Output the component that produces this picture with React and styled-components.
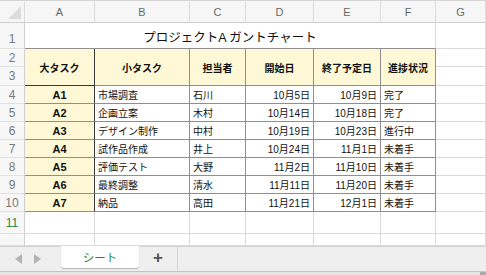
import React from 'react';
import styled, { createGlobalStyle } from 'styled-components';

const GlobalStyle = createGlobalStyle`
  html, body {
    margin: 0;
    padding: 0;
    background: #ffffff;
    overflow: hidden;
  }
  * {
    box-sizing: border-box;
  }
`;

const Page = styled.div`
  width: 486px;
  height: 275px;
  display: flex;
  flex-direction: column;
  font-family: "Liberation Sans", "Noto Sans CJK JP", sans-serif;
  color: #111;
`;

const Sheet = styled.div`
  flex: 1;
  display: grid;
  grid-template-columns: 25px 70px 95px 56px 68px 67px 55px 1fr;
  grid-template-rows: 23px 26px 18px 19px repeat(7, 18px) 22px 1fr;
  overflow: hidden;
`;

const ColHead = styled.div`
  background: #f6f6f6;
  border-top: 1px solid #d4d4d4;
  border-right: 1px solid #dcdcdc;
  border-bottom: 1px solid #cfcfcf;
  display: flex;
  align-items: center;
  justify-content: center;
  font-size: 11px;
  color: #6a6a6a;
`;

const Corner = styled(ColHead)`
  position: relative;
  svg {
    position: absolute;
    right: 3px;
    bottom: 3px;
  }
`;

const RowHead = styled.div`
  grid-row: ${(p) => p.$row || 'auto'};
  background: #f7f7f7;
  border-right: 1px solid #cfcfcf;
  border-bottom: 1px solid #e0e0e0;
  display: flex;
  align-items: center;
  justify-content: center;
  font-size: 12px;
  color: ${(p) => (p.$active ? '#1d8a4a' : '#777')};
`;

const Cell = styled.div`
  grid-column: ${(p) => p.$col || 'auto'};
  grid-row: ${(p) => p.$row || 'auto'};
  border-right: 1px solid ${(p) => p.$edge || '#dadada'};
  border-bottom: 1px solid ${(p) => p.$line || '#dadada'};
  background: ${(p) => p.$bg || '#ffffff'};
  display: flex;
  align-items: center;
  justify-content: ${(p) => p.$align || 'flex-start'};
  padding: 0 3px;
  font-size: 10px;
  font-weight: ${(p) => (p.$bold ? 700 : 400)};
  white-space: nowrap;
  overflow: hidden;
`;

const Title = styled(Cell)`
  font-size: 12.5px;
  justify-content: center;
  padding-top: 1px;
`;

const HeadCell = styled(Cell)`
  font-size: 10px;
  font-weight: 700;
  justify-content: center;
  background: #fef8d6;
`;

const TabBar = styled.div`
  height: 25px;
  display: flex;
  align-items: stretch;
  background: #efefef;
  border-top: 1px solid #d2d2d2;
`;

const NavArrows = styled.div`
  width: 61px;
  display: flex;
  align-items: center;
  justify-content: center;
  gap: 12px;
  padding-right: 6px;
`;

const Tab = styled.div`
  width: 78px;
  margin-top: -1px;
  margin-bottom: 3px;
  background: #ffffff;
  border-radius: 0 0 3px 3px;
  box-shadow: 0 1px 1px rgba(0, 0, 0, 0.25);
  display: flex;
  align-items: center;
  justify-content: center;
  font-size: 11.5px;
  color: #1d8a4a;
`;

const AddButton = styled.div`
  width: 39px;
  border-right: 1px solid #d4d4d4;
  display: flex;
  align-items: center;
  justify-content: center;
  font-size: 17px;
  font-weight: 700;
  color: #555;
  padding-bottom: 2px;
`;

const BottomStrip = styled.div`
  height: 4px;
  background: #e6e6e6;
  border-top: 1px solid #c4c4c4;
  display: flex;
  justify-content: flex-end;
`;

const ScrollNub = styled.div`
  width: 6px;
  background: #aaaaaa;
`;

const columns = ['A', 'B', 'C', 'D', 'E', 'F', 'G'];

const tasks = [
  ['A1', '市場調査', '石川', '10月5日', '10月9日', '完了'],
  ['A2', '企画立案', '木村', '10月14日', '10月18日', '完了'],
  ['A3', 'デザイン制作', '中村', '10月19日', '10月23日', '進行中'],
  ['A4', '試作品作成', '井上', '10月24日', '11月1日', '未着手'],
  ['A5', '評価テスト', '大野', '11月2日', '11月10日', '未着手'],
  ['A6', '最終調整', '清水', '11月11日', '11月20日', '未着手'],
  ['A7', '納品', '高田', '11月21日', '12月1日', '未着手'],
];

const headers = ['大タスク', '小タスク', '担当者', '開始日', '終了予定日', '進捗状況'];

const TABLE = '#8f8f8f';
const DARK = '#3a3a3a';
const YELLOW = '#fef8d6';

export default function App() {
  return (
    <Page>
      <GlobalStyle />
      <Sheet>
        <Corner>
          <svg width="13" height="13" viewBox="0 0 13 13">
            <polygon points="13,0 13,13 0,13" fill="#dcdcdc" />
          </svg>
        </Corner>
        {columns.map((c) => (
          <ColHead key={c}>{c}</ColHead>
        ))}

        {/* row 1: title */}
        <RowHead $row="2" style={{ alignItems: 'flex-end', paddingBottom: 2 }}>1</RowHead>
        <Title $col="2 / span 6" $row="2" $line={TABLE}>
          プロジェクトA ガントチャート
        </Title>
        <Cell $col="8" $row="2" />

        {/* rows 2-3: table header */}
        <RowHead $row="3">2</RowHead>
        <RowHead $row="4">3</RowHead>
        {headers.map((h, i) => (
          <HeadCell
            key={h}
            $col={`${i + 2}`}
            $row="3 / span 2"
            $edge={i === 0 ? DARK : TABLE}
            $line={i === 0 ? DARK : TABLE}
          >
            {h}
          </HeadCell>
        ))}
        <Cell $col="8" $row="3" />
        <Cell $col="8" $row="4" />

        {/* rows 4-10: tasks */}
        {tasks.map((t, r) => (
          <React.Fragment key={t[0]}>
            <RowHead $row={`${r + 5}`}>{r + 4}</RowHead>
            <Cell $row={`${r + 5}`} $bg={YELLOW} $bold $align="center" $edge={DARK} $line={TABLE} style={{ fontSize: 11 }}>
              {t[0]}
            </Cell>
            <Cell $row={`${r + 5}`} $edge={TABLE} $line={TABLE}>{t[1]}</Cell>
            <Cell $row={`${r + 5}`} $edge={TABLE} $line={TABLE}>{t[2]}</Cell>
            <Cell $row={`${r + 5}`} $edge={TABLE} $line={TABLE} $align="flex-end">{t[3]}</Cell>
            <Cell $row={`${r + 5}`} $edge={TABLE} $line={TABLE} $align="flex-end">{t[4]}</Cell>
            <Cell $row={`${r + 5}`} $edge={TABLE} $line={TABLE}>{t[5]}</Cell>
            <Cell $row={`${r + 5}`} />
          </React.Fragment>
        ))}

        {/* empty rows */}
        <RowHead $row="12" $active>11</RowHead>
        {columns.map((c) => (
          <Cell key={`11${c}`} $row="12" />
        ))}
        <RowHead $row="13" />
        {columns.map((c) => (
          <Cell key={`12${c}`} $row="13" />
        ))}
      </Sheet>

      <TabBar>
        <NavArrows>
          <svg width="7" height="10" viewBox="0 0 7 10">
            <polygon points="7,0 7,10 0,5" fill="#b4b4b4" />
          </svg>
          <svg width="7" height="10" viewBox="0 0 7 10">
            <polygon points="0,0 0,10 7,5" fill="#b4b4b4" />
          </svg>
        </NavArrows>
        <Tab>シート</Tab>
        <AddButton>+</AddButton>
      </TabBar>
      <BottomStrip>
        <ScrollNub />
      </BottomStrip>
    </Page>
  );
}
